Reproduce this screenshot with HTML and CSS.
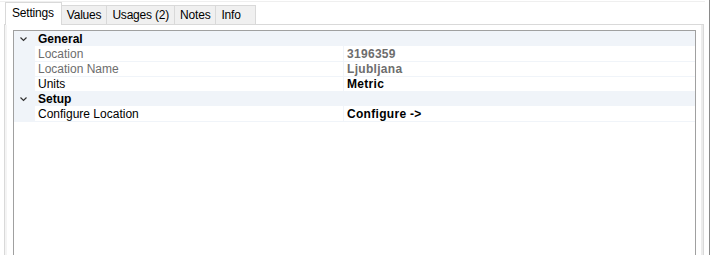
FILE: index.html
```html
<!DOCTYPE html>
<html lang="en">
<head>
  <meta charset="UTF-8" />
  <title>Settings</title>
  <link rel="stylesheet" href="styles.css">
</head>
<body>
  <div class="window">
    <div class="topline"></div>
    <div class="tabs">
      <div class="tab active">Settings</div>
      <div class="tab">Values</div>
      <div class="tab">Usages (2)</div>
      <div class="tab">Notes</div>
      <div class="tab">Info</div>
    </div>
    <div class="panel">
      <div class="grid">
        <div class="cat">
          <span class="gutter"><svg width="7" height="5" viewBox="0 0 7 5"><polyline points="0.5,0.5 3.5,3.5 6.5,0.5" fill="none" stroke="#333" stroke-width="1.2"/></svg></span>
          <span class="cat-name">General</span>
        </div>
        <div class="prop">
          <span class="gutter"></span>
          <span class="label dim">Location</span>
          <span class="value dim">3196359</span>
        </div>
        <div class="prop">
          <span class="gutter"></span>
          <span class="label dim">Location Name</span>
          <span class="value dim">Ljubljana</span>
        </div>
        <div class="prop">
          <span class="gutter"></span>
          <span class="label">Units</span>
          <span class="value">Metric</span>
        </div>
        <div class="cat">
          <span class="gutter"><svg width="7" height="5" viewBox="0 0 7 5"><polyline points="0.5,0.5 3.5,3.5 6.5,0.5" fill="none" stroke="#333" stroke-width="1.2"/></svg></span>
          <span class="cat-name">Setup</span>
        </div>
        <div class="prop">
          <span class="gutter"></span>
          <span class="label">Configure Location</span>
          <span class="value">Configure -&gt;</span>
        </div>
      </div>
    </div>
  </div>
</body>
</html>
```

FILE: styles.css
```css
* { box-sizing: border-box; }
body {
  margin: 0;
  background: #fff;
  font-family: 'Liberation Sans', Arial, sans-serif;
  font-size: 12px;
  color: #000;
}
.window {
  width: 710px;
  height: 255px;
  overflow: hidden;
  border-right: 1px solid #8a8a8a;
}
.topline {
  height: 1px;
  margin-top: 1px;
  width: 705px;
  background: #efefef;
}
.tabs {
  display: flex;
  align-items: flex-end;
  height: 22px;
  padding-left: 5px;
  position: relative;
  z-index: 1;
}
.tab {
  height: 19px;
  min-width: 41px;
  padding: 2px 5px 0;
  background: #f0f0f0;
  border: 1px solid #d9d9d9;
  border-bottom: none;
  margin-left: -1px;
  line-height: 15px;
  white-space: nowrap;
  letter-spacing: -0.2px;
}
.tab.active {
  height: 23px;
  margin-bottom: -1px;
  background: #fff;
  padding-top: 3px;
  margin-left: 0;
  padding-left: 6px;
  padding-right: 7px;
}
.panel {
  margin-left: 4px;
  width: 700px;
  height: 240px;
  border: 1px solid #d9d9d9;
  border-bottom: none;
  box-shadow: inset 2px 0 0 #f4f4f4, inset -2px 0 0 #ececec;
  padding: 5px 8px 0 8px;
}
.grid {
  width: 683px;
  height: 240px;
  border: 1px solid #a0a0a0;
  border-bottom: none;
  background: #fff;
}
.cat, .prop {
  display: grid;
  grid-template-columns: 21px 308px 1fr;
  height: 15px;
  line-height: 14px;
}
.cat {
  background: #f0f4f9;
  border-bottom: 1px solid #f0f4f9;
}
.gutter {
  background: #f0f4f9;
  display: flex;
  align-items: center;
  justify-content: center;
  padding-right: 2px;
  padding-top: 1px;
}
.cat-name {
  font-weight: bold;
  padding-left: 3px;
  padding-top: 1px;
  grid-column: 2 / 4;
}
.label {
  padding-left: 3px;
  padding-top: 1px;
  border-bottom: 1px solid #f0f4f9;
}
.value {
  padding-left: 3px;
  padding-top: 1px;
  font-weight: bold;
  border-left: 1px solid #f0f4f9;
  border-bottom: 1px solid #f0f4f9;
  letter-spacing: 0.3px;
}
.dim { color: #6d6d6d; }
```
